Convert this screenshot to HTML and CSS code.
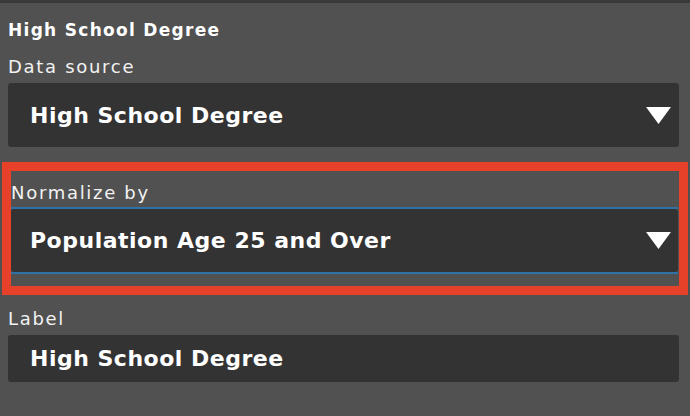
FILE: index.html
```html
<!DOCTYPE html>
<html lang="en">
<head>
  <meta charset="UTF-8">
  <meta name="viewport" content="width=device-width, initial-scale=1.0">
  <title>Layer settings</title>
  <link rel="stylesheet" href="styles.css">
</head>
<body>
  <div class="panel">
    <h2 class="panel-title">High School Degree</h2>

    <!-- Data source -->
    <div class="field">
      <label class="field-label">Data source</label>
      <div class="select-box">
        <span class="select-value">High School Degree</span>
        <svg class="select-arrow" width="25" height="17" viewBox="0 0 25 17"><polygon points="0,0 25,0 12.5,17" fill="#fff"/></svg>
      </div>
    </div>

    <!-- Normalize by (highlighted) -->
    <div class="highlight">
      <label class="field-label">Normalize by</label>
      <div class="focus-line">
        <div class="select-box focused">
          <span class="select-value">Population Age 25 and Over</span>
          <svg class="select-arrow" width="25" height="17" viewBox="0 0 25 17"><polygon points="0,0 25,0 12.5,17" fill="#fff"/></svg>
        </div>
      </div>
    </div>

    <!-- Label -->
    <div class="field label-field">
      <label class="field-label">Label</label>
      <div class="text-box">
        <span class="select-value">High School Degree</span>
      </div>
    </div>
  </div>
</body>
</html>
```

FILE: styles.css
```css
html, body {
  margin: 0;
  height: 100%;
  background: #515151;
  overflow: hidden;
}

.panel {
  border-top: 3px solid #393939;
  padding: 17px 11px 0 8px;
  font-family: "DejaVu Sans", sans-serif;
  color: #fff;
}

.panel-title {
  margin: 0;
  font-size: 17px;
  line-height: 20px;
  font-weight: bold;
  letter-spacing: 1.3px;
}

.field {
  margin-top: 16px;
}

.field-label {
  display: block;
  font-size: 18px;
  line-height: 22px;
  letter-spacing: 1.7px;
  color: #f2f2f2;
}

/* Dark select boxes */
.select-box {
  display: flex;
  align-items: center;
  justify-content: space-between;
  height: 64px;
  margin-top: 5px;
  padding: 0 8px 0 22px;
  background: #333;
  border-radius: 3px;
}

.select-value {
  font-size: 22px;
  font-weight: bold;
  letter-spacing: 0.5px;
  white-space: nowrap;
}

.select-arrow {
  display: block;
  flex: none;
}

/* Red annotation frame around the Normalize field */
.highlight {
  margin: 15px -9px 0 -6px;
  border: 9px solid #e8412a;
  padding: 11px 1px 12px 0;
}

.focus-line {
  margin-top: 3px;
  border-top: 2px solid #2e72a6;
  border-bottom: 2px solid #2e72a6;
}

.select-box.focused {
  margin-top: 0;
  padding: 0 7px 0 19px;
  height: 63px;
}

.label-field {
  margin-top: 13px;
}

.text-box {
  display: flex;
  align-items: center;
  height: 47px;
  margin-top: 5px;
  padding: 0 22px;
  background: #333;
  border-radius: 3px;
}
```
